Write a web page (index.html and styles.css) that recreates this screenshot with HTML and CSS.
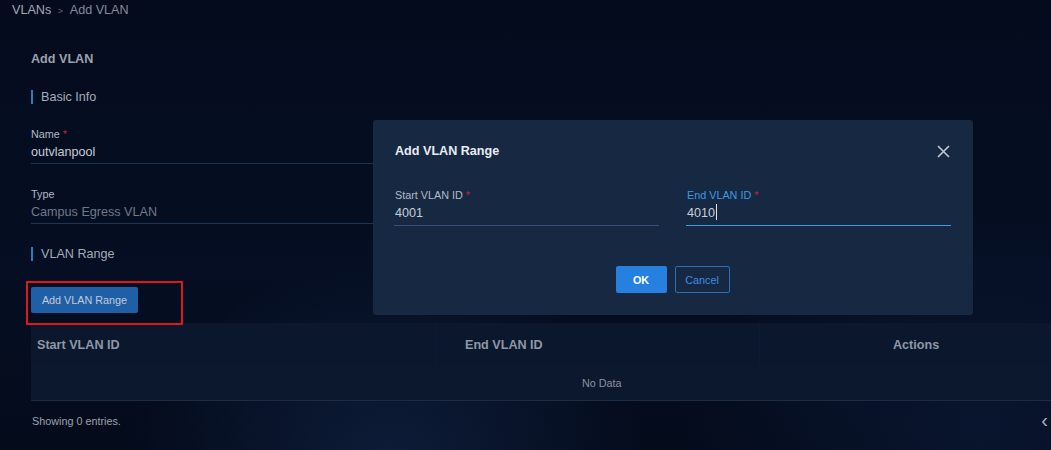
FILE: index.html
```html
<!DOCTYPE html>
<html lang="en">
<head>
    <meta charset="UTF-8">
    <meta name="viewport" content="width=device-width, initial-scale=1.0">
    <title>Add VLAN</title>
    <link rel="stylesheet" href="styles.css">
</head>
<body>
<div class="breadcrumb">
    <a href="#">VLANs</a>
    <span class="sep">&gt;</span>
    <span class="current">Add VLAN</span>
</div>

<div class="page">
    <h1 class="page-title">Add VLAN</h1>

    <!-- Basic Info -->
    <div class="section-title">Basic Info</div>
    <div class="field">
        <label>Name <span class="req">*</span></label>
        <div class="value">outvlanpool</div>
    </div>
    <div class="field">
        <label>Type</label>
        <div class="value disabled">Campus Egress VLAN</div>
    </div>

    <!-- VLAN Range -->
    <div class="section-title">VLAN Range</div>
    <div class="toolbar">
        <button class="btn-add">Add VLAN Range</button>
    </div>

    <table class="range-table">
        <thead>
        <tr>
            <th class="col-start">Start VLAN ID</th>
            <th class="col-end">End VLAN ID</th>
            <th class="col-actions">Actions</th>
        </tr>
        </thead>
        <tbody>
        <tr>
            <td colspan="3" class="empty">No Data</td>
        </tr>
        </tbody>
    </table>

    <div class="table-footer">
        <span>Showing 0 entries.</span>
        <span class="pager">&lsaquo;</span>
    </div>
</div>

<!-- Add VLAN Range dialog -->
<div class="modal">
    <div class="modal-header">
        <span class="modal-title">Add VLAN Range</span>
        <svg class="close" width="13" height="13" viewBox="0 0 13 13">
            <path d="M1 1L12 12M12 1L1 12" stroke="#c3c9d3" stroke-width="1.6" fill="none"/>
        </svg>
    </div>
    <div class="modal-body">
        <div class="field">
            <label>Start VLAN ID <span class="req">*</span></label>
            <div class="value">4001</div>
        </div>
        <div class="field focused">
            <label>End VLAN ID <span class="req">*</span></label>
            <div class="value">4010<span class="caret"></span></div>
        </div>
    </div>
    <div class="modal-footer">
        <button class="btn-ok">OK</button>
        <button class="btn-cancel">Cancel</button>
    </div>
</div>
</body>
</html>
```

FILE: styles.css
```css
body {
    font-family: "Liberation Sans", Arial, sans-serif;
    margin: 0;
    padding: 0;
    width: 1051px;
    height: 450px;
    overflow: hidden;
    position: relative;
    background-color: #040b1c;
    background-image:
        radial-gradient(ellipse 260px 200px at 390px 460px, rgba(30, 60, 110, 0.35), transparent),
        radial-gradient(ellipse 300px 220px at 980px 430px, rgba(20, 45, 90, 0.3), transparent),
        linear-gradient(180deg, #040b1d 0%, #050e22 60%, #040b1b 100%);
}

.breadcrumb {
    height: 20px;
    line-height: 20px;
    padding-left: 12px;
    font-size: 12.6px;
    color: #858d9b;
}

.breadcrumb a {
    color: #a2aab7;
    text-decoration: none;
}

.breadcrumb .sep {
    font-size: 9px;
    color: #5f6878;
    margin: 0 4px 0 3px;
}

.page {
    padding-left: 31px;
}

.page-title {
    margin: 29px 0 0;
    font-size: 12.6px;
    line-height: 20px;
    color: #9ba2ad;
}

.section-title {
    height: 14px;
    line-height: 14px;
    margin-top: 21px;
    padding-left: 8px;
    border-left: 2px solid #2c7bbd;
    font-size: 12.6px;
    color: #a4acb8;
}

.field {
    width: 560px;
    margin-top: 22px;
    border-bottom: 1px solid #1f3452;
}

.field label {
    display: block;
    font-size: 10.8px;
    line-height: 16px;
    color: #b3bac5;
}

.req {
    color: #c8262c;
}

.field .value {
    font-size: 12.6px;
    line-height: 20px;
    padding-bottom: 1px;
    color: #c6ccd5;
}

.field .value.disabled {
    color: #6f798a;
}

.field + .section-title {
    margin-top: 23px;
}

.toolbar {
    position: relative;
    margin-top: 26px;
    height: 26px;
}

/* red highlight around the button */
.toolbar::after {
    content: "";
    position: absolute;
    left: -5px;
    top: -6px;
    width: 153px;
    height: 40px;
    border: 2px solid #e3141c;
    z-index: 2;
}

.btn-add {
    height: 26px;
    width: 107px;
    padding: 0;
    font-family: inherit;
    font-size: 10.8px;
    color: #c3cad6;
    background-color: #1e5fa6;
    border: none;
    border-radius: 2px;
}

.range-table {
    margin-top: 10px;
    width: 1120px;
    border-collapse: collapse;
}

.range-table th {
    height: 43px;
    padding: 0 0 0 6px;
    text-align: left;
    font-size: 12.6px;
    color: #8e97a6;
    background-color: #0b172d;
    border-left: 1px solid #0d1a31;
}

.range-table th.col-start {
    width: 398px;
    border-left: none;
}

.range-table th.col-end {
    width: 294px;
    padding-left: 29px;
}

.range-table th.col-actions {
    padding-left: 133px;
}

.range-table td.empty {
    height: 34px;
    padding: 0 0 0 551px;
    text-align: left;
    font-size: 10.8px;
    color: #8b93a1;
    background-color: #0b182e;
    border-bottom: 1px solid #1c2c45;
}

.table-footer {
    display: flex;
    justify-content: space-between;
    margin-top: 12px;
    padding-left: 1px;
    font-size: 10.8px;
    line-height: 16px;
    color: #9aa2af;
}

.pager {
    font-size: 20px;
    color: #aab2c0;
    margin-right: 3px;
    line-height: 14px;
}

/* modal */
.modal {
    position: absolute;
    left: 373px;
    top: 120px;
    width: 600px;
    box-sizing: border-box;
    padding: 21px 22px 22px 21px;
    background-color: #172843;
    border-radius: 3px;
    z-index: 3;
}

.modal-header {
    display: flex;
    justify-content: space-between;
    align-items: center;
    height: 20px;
    padding-left: 1px;
}

.modal-title {
    font-size: 12.6px;
    font-weight: bold;
    color: #e9edf3;
}

.close {
    margin-right: 1px;
}

.modal-body {
    display: flex;
    gap: 27px;
    margin-top: 26px;
}

.modal-body .field {
    flex: 1;
    width: auto;
    margin-top: 0;
    padding-bottom: 1px;
    border-bottom-color: #35507a;
}

.modal-body .field label,
.modal-body .field .value {
    padding-left: 1px;
}

.modal-body .field .value {
    color: #c9cfd8;
}

.modal-body .field.focused {
    border-bottom-color: #3a9fe6;
}

.modal-body .field.focused label {
    color: #3b9be0;
}

.caret {
    display: inline-block;
    width: 1px;
    height: 16px;
    margin-left: 1px;
    vertical-align: -3px;
    background-color: #dfe4ea;
}

.modal-footer {
    display: flex;
    justify-content: center;
    gap: 8px;
    margin-top: 40px;
}

.modal-footer button {
    height: 27px;
    padding: 0;
    font-family: inherit;
    font-size: 10.8px;
    border-radius: 2px;
}

.btn-ok {
    width: 51px;
    font-weight: bold;
    color: #ffffff;
    background-color: #2580df;
    border: none;
}

.btn-cancel {
    width: 55px;
    color: #3a8fe2;
    background-color: transparent;
    border: 1px solid #2a6dbd;
}
```
